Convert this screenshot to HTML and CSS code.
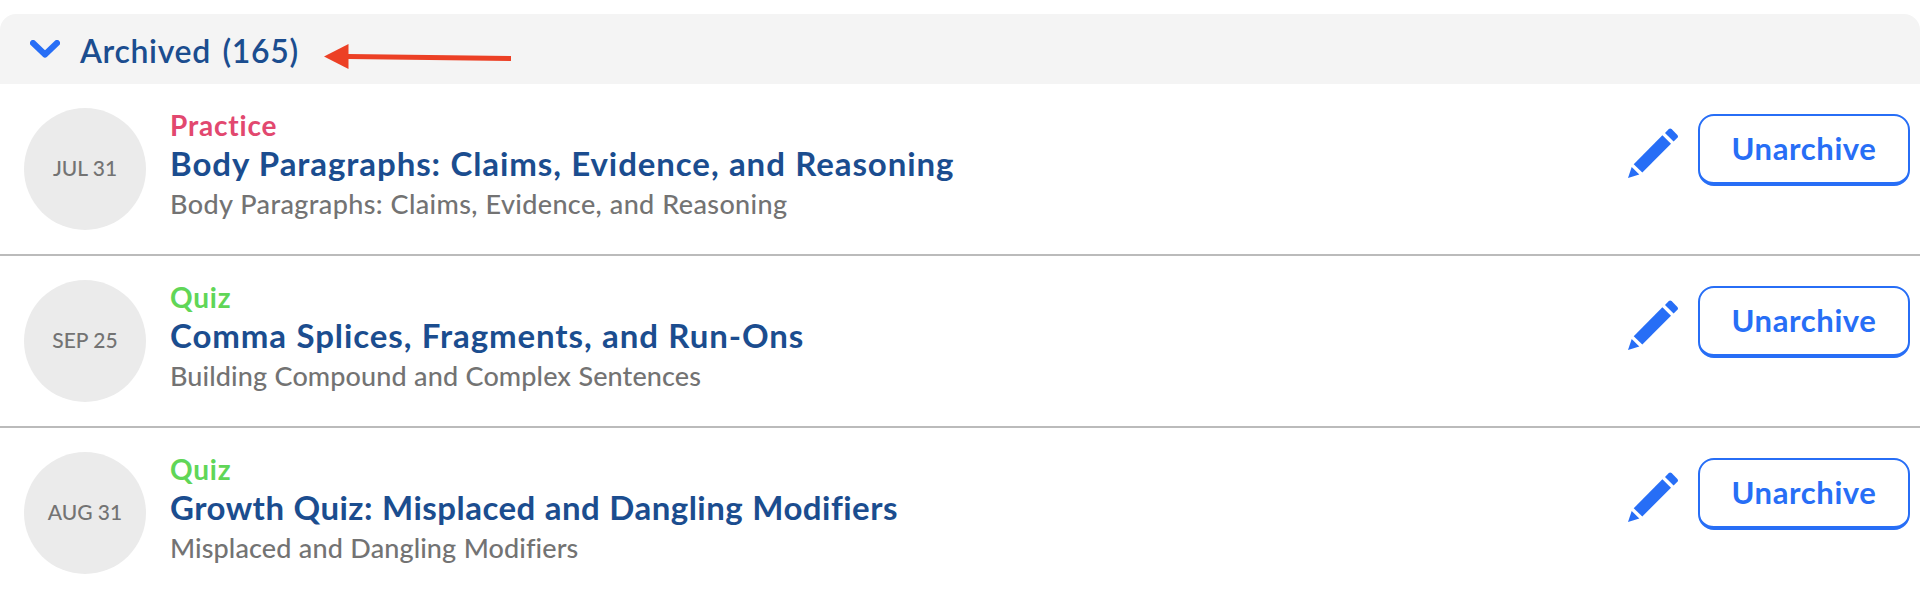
FILE: index.html
```html
<!DOCTYPE html>
<html lang="en">
<head>
    <meta charset="UTF-8">
    <meta name="viewport" content="width=device-width, initial-scale=1.0">
    <title>Archived Assignments</title>
    <link rel="stylesheet" href="styles.css">
</head>
<body>
    <svg class="symbols" width="0" height="0">
        <symbol id="pencil" viewBox="0 0 50 50">
            <path d="M0 50L3.7 39L11.3 46.6Z"/>
            <path d="M5.7 36.2L34.4 7.2L43 15.8L14.3 44.4Z"/>
            <path d="M37 5L40.8 1.1Q42.2 -0.3 43.6 1.1L49.4 7Q50.6 8.4 49.4 9.8L45.6 13.5Z"/>
        </symbol>
    </svg>

    <div class="archived">
        <div class="archived-header">
            <svg class="chevron" viewBox="0 0 30 18"><path d="M3 3L15 14.5L27 3"/></svg>
            <h2>Archived (165)</h2>
            <svg class="arrow" viewBox="0 0 190 26">
                <path d="M24 12.5L187 14.5"/>
                <polygon points="0,12.5 24.5,0 24.5,25"/>
            </svg>
        </div>

        <div class="assignment">
            <div class="date">JUL 31</div>
            <div class="details">
                <div class="type practice">Practice</div>
                <div class="title">Body Paragraphs: Claims, Evidence, and Reasoning</div>
                <div class="topic wide">Body Paragraphs: Claims, Evidence, and Reasoning</div>
            </div>
            <svg class="edit"><use href="#pencil"/></svg>
            <button class="unarchive">Unarchive</button>
        </div>

        <div class="assignment">
            <div class="date">SEP 25</div>
            <div class="details">
                <div class="type quiz">Quiz</div>
                <div class="title">Comma Splices, Fragments, and Run-Ons</div>
                <div class="topic">Building Compound and Complex Sentences</div>
            </div>
            <svg class="edit"><use href="#pencil"/></svg>
            <button class="unarchive">Unarchive</button>
        </div>

        <div class="assignment">
            <div class="date">AUG 31</div>
            <div class="details">
                <div class="type quiz">Quiz</div>
                <div class="title tight">Growth Quiz: Misplaced and Dangling Modifiers</div>
                <div class="topic">Misplaced and Dangling Modifiers</div>
            </div>
            <svg class="edit"><use href="#pencil"/></svg>
            <button class="unarchive">Unarchive</button>
        </div>
    </div>
</body>
</html>
```
FILE: styles.css
```css
* {
    box-sizing: border-box;
}
body {
    margin: 0;
    background-color: #fff;
    font-family: Lato, "Liberation Sans", sans-serif;
    overflow: hidden;
}
.symbols {
    display: block;
}
.archived {
    width: 1920px;
    padding-top: 14px;
}
.archived-header {
    display: flex;
    align-items: center;
    height: 70px;
    padding-left: 30px;
    background-color: #f4f4f4;
    border-radius: 16px 16px 0 0;
}
.chevron {
    width: 30px;
    height: 18px;
    fill: none;
    stroke: #276ef6;
    stroke-width: 6;
    stroke-linecap: round;
    stroke-linejoin: round;
}
.archived-header h2 {
    width: 218px;
    margin: 2px 26px 0 20px;
    color: #1b4d8f;
    font-size: 32px;
    font-weight: 600;
    letter-spacing: 0.65px;
    word-spacing: 3px;
    white-space: nowrap;
}
.arrow {
    width: 190px;
    height: 26px;
    margin-top: 16px;
    fill: #ec4025;
    stroke: none;
}
.arrow path {
    stroke: #ec4025;
    stroke-width: 5;
}
.assignment {
    display: flex;
    align-items: flex-start;
    height: 172px;
    padding: 24px 10px 0 24px;
    border-bottom: 2px solid #bbb;
}
.assignment:last-child {
    border-bottom: none;
}
.date {
    display: flex;
    align-items: center;
    justify-content: center;
    width: 122px;
    height: 122px;
    margin-right: 24px;
    padding-bottom: 3px;
    border-radius: 50%;
    background-color: #ebebeb;
    color: #737373;
    font-size: 21px;
    font-weight: 500;
}
.details {
    flex: 1;
    margin-top: -1px;
    white-space: nowrap;
}
.type {
    line-height: 36px;
    font-size: 28px;
    font-weight: bold;
    letter-spacing: 0.8px;
}
.practice {
    color: #e2486f;
}
.quiz {
    color: #60d657;
}
.title {
    line-height: 40px;
    margin-bottom: 2px;
    color: #1b4d8f;
    font-size: 33px;
    font-weight: bold;
    letter-spacing: 0.91px;
    word-spacing: 0.5px;
}
.title.tight {
    letter-spacing: 0.48px;
}
.topic {
    line-height: 38px;
    color: #737373;
    font-size: 27px;
    font-weight: 500;
    letter-spacing: 0.1px;
    word-spacing: 0.5px;
}
.topic.wide {
    letter-spacing: 0.36px;
}
.edit {
    width: 50px;
    height: 50px;
    margin: 20px 20px 0 0;
    fill: #276ef6;
}
.unarchive {
    width: 212px;
    height: 72px;
    margin-top: 6px;
    padding: 0 0 2px;
    border: 2px solid #276ef6;
    border-bottom-width: 4px;
    border-radius: 16px;
    background-color: #fff;
    color: #276ef6;
    font-family: inherit;
    font-size: 31px;
    font-weight: bold;
    letter-spacing: 0.6px;
}
```
